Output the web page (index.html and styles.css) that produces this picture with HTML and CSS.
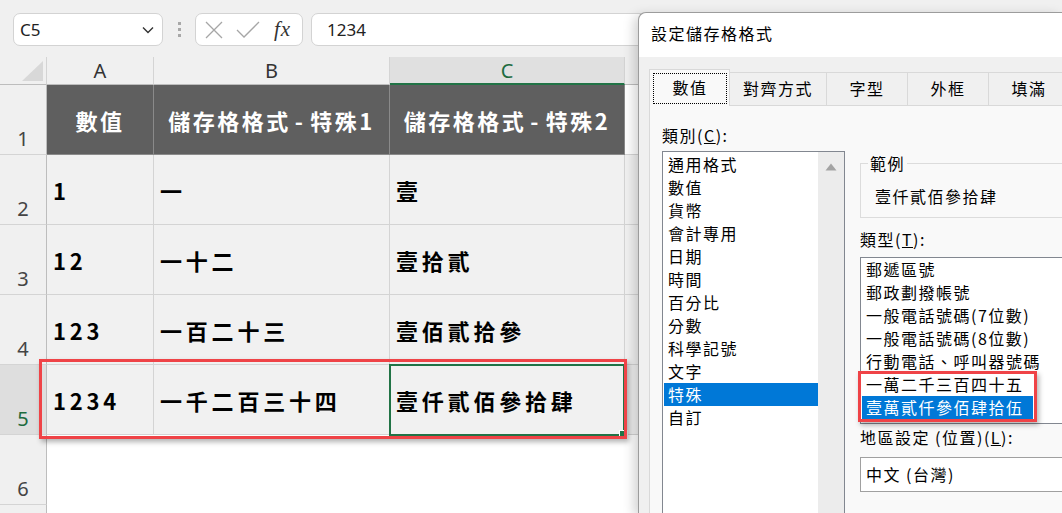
FILE: index.html
```html
<!DOCTYPE html>
<html lang="zh-Hant">
<head>
  <meta charset="UTF-8">
  <meta name="viewport" content="width=device-width, initial-scale=1.0">
  <link rel="stylesheet" href="styles.css">
</head>
<body>
<div class="excel">
  <div class="topbar">
    <div class="namebox">
      <span>C5</span>
      <svg width="12" height="8" viewBox="0 0 12 8"><path d="M1 1.5 L6 6.5 L11 1.5" fill="none" stroke="#333" stroke-width="1.4"/></svg>
    </div>
    <div class="grip"><i></i><i></i><i></i></div>
    <div class="fxbox">
      <svg width="18" height="18" viewBox="0 0 18 18"><path d="M1 1 L17 17 M17 1 L1 17" stroke="#a6a6a6" stroke-width="1.3"/></svg>
      <svg width="24" height="18" viewBox="0 0 24 18"><path d="M1 9 L8 16 L23 1" fill="none" stroke="#a6a6a6" stroke-width="1.3"/></svg>
      <span class="fx">fx</span>
    </div>
    <div class="formula">1234</div>
  </div>

  <div class="sheet">
    <div class="corner"><i></i></div>
    <div class="colhead">A</div>
    <div class="colhead">B</div>
    <div class="colhead sel">C</div>
    <div class="colhead"></div>

    <div class="rowhead">1</div>
    <div class="cell title">數值</div>
    <div class="cell title">儲存格格式<span class="dash">-</span>特殊1</div>
    <div class="cell title">儲存格格式<span class="dash">-</span>特殊2</div>
    <div class="cell"></div>

    <div class="rowhead">2</div>
    <div class="cell data">1</div>
    <div class="cell data">一</div>
    <div class="cell data">壹</div>
    <div class="cell data"></div>

    <div class="rowhead">3</div>
    <div class="cell data">12</div>
    <div class="cell data">一十二</div>
    <div class="cell data">壹拾貳</div>
    <div class="cell data"></div>

    <div class="rowhead">4</div>
    <div class="cell data">123</div>
    <div class="cell data">一百二十三</div>
    <div class="cell data">壹佰貳拾參</div>
    <div class="cell data"></div>

    <div class="rowhead sel">5</div>
    <div class="cell data">1234</div>
    <div class="cell data">一千二百三十四</div>
    <div class="cell data active">壹仟貳佰參拾肆</div>
    <div class="cell data"></div>

    <div class="rowhead">6</div>
    <div class="cell empty"></div>
    <div class="cell empty"></div>
    <div class="cell empty"></div>
    <div class="cell empty"></div>

    <div class="rowhead"></div>
    <div class="cell empty"></div>
    <div class="cell empty"></div>
    <div class="cell empty"></div>
    <div class="cell empty"></div>
  </div>
</div>

<div class="dialog">
  <div class="dlg-title">設定儲存格格式</div>
  <div class="tabs">
    <div class="tab sel"><span>數值</span></div>
    <div class="tab wide">對齊方式</div>
    <div class="tab">字型</div>
    <div class="tab">外框</div>
    <div class="tab">填滿</div>
  </div>
  <div class="panel">
    <div class="left-col">
      <div class="label">類別(<u>C</u>):</div>
      <div class="listbox">
        <ul class="items">
          <li>通用格式</li>
          <li>數值</li>
          <li>貨幣</li>
          <li>會計專用</li>
          <li>日期</li>
          <li>時間</li>
          <li>百分比</li>
          <li>分數</li>
          <li>科學記號</li>
          <li>文字</li>
          <li class="sel">特殊</li>
          <li>自訂</li>
        </ul>
        <div class="scrollbar">
          <svg width="12" height="8" viewBox="0 0 12 8"><path d="M6 0.5 L11.5 7.5 L0.5 7.5 Z" fill="#a3a3a3"/></svg>
        </div>
      </div>
    </div>
    <div class="right-col">
      <div class="group">
        <div class="group-label">範例</div>
        <div class="sample">壹仟貳佰參拾肆</div>
      </div>
      <div class="label type-label">類型(<u>T</u>):</div>
      <ul class="typelist">
        <li>郵遞區號</li>
        <li>郵政劃撥帳號</li>
        <li>一般電話號碼(7位數)</li>
        <li>一般電話號碼(8位數)</li>
        <li>行動電話、呼叫器號碼</li>
        <li>一萬二千三百四十五</li>
        <li class="sel">壹萬貳仟參佰肆拾伍</li>
      </ul>
      <div class="label locale-label">地區設定 (位置)(<u>L</u>):</div>
      <div class="dropdown">中文 (台灣)</div>
    </div>
  </div>
</div>

<div class="mark mark-sheet"></div>
<div class="mark mark-type"></div>
</body>
</html>
```

FILE: styles.css
```css
* {
  box-sizing: border-box;
}

body {
  margin: 0;
  width: 1062px;
  height: 513px;
  overflow: hidden;
  position: relative;
  background: #fff;
  font-family: "Noto Sans", "Noto Sans CJK TC", sans-serif;
}

.excel {
  height: 513px;
  overflow: hidden;
}

/* formula bar */
.topbar {
  height: 57px;
  background: #f0f0f0;
  display: flex;
  align-items: flex-start;
  padding: 13px 0 0 13px;
}

.namebox {
  width: 150px;
  height: 33px;
  background: #fff;
  border: 1px solid #d3d3d3;
  border-radius: 7px;
  display: flex;
  align-items: center;
  justify-content: space-between;
  padding: 0 8px 0 6px;
  font-size: 17px;
  color: #222;
}

.grip {
  width: 32px;
  height: 33px;
  display: flex;
  flex-direction: column;
  align-items: center;
  justify-content: center;
  gap: 3px;
}

.grip i {
  width: 3px;
  height: 3px;
  background: #a8a8a8;
}

.fxbox {
  width: 108px;
  height: 33px;
  background: #fff;
  border: 1px solid #d3d3d3;
  border-radius: 7px;
  display: flex;
  align-items: center;
  padding: 0 6px 0 9px;
  gap: 13px;
}

.fxbox .fx {
  font-family: "Liberation Serif", serif;
  font-style: italic;
  font-size: 21px;
  color: #333;
  margin-left: 1px;
  letter-spacing: 1px;
}

.formula {
  flex: 1;
  height: 33px;
  margin-left: 8px;
  background: #fff;
  border: 1px solid #d3d3d3;
  border-radius: 7px 0 0 7px;
  padding-left: 15px;
  line-height: 31px;
  font-size: 17px;
  color: #222;
}

/* grid */
.sheet {
  display: grid;
  grid-template-columns: 47px 107px 236px 235px 1fr;
  grid-template-rows: 28px repeat(7, 70px);
}

.corner {
  background: #f0f0f0;
  border-right: 1px solid #d4d4d4;
  border-bottom: 1px solid #bdbdbd;
  display: flex;
  align-items: flex-end;
  justify-content: flex-end;
  padding: 0 3px 3px 0;
}

.corner i {
  width: 21px;
  height: 20px;
  background: #d8d8d8;
  clip-path: polygon(100% 0, 100% 100%, 0 100%);
}

.colhead {
  background: #f0f0f0;
  border-right: 1px solid #d4d4d4;
  border-bottom: 1px solid #bdbdbd;
  text-align: center;
  font-size: 20px;
  line-height: 27px;
  color: #333;
}

.colhead.sel {
  background: #e0e0e0;
  color: #1d6b3f;
  border-bottom: 2px solid #217346;
}

.rowhead {
  background: #f0f0f0;
  border-right: 1px solid #bdbdbd;
  border-bottom: 1px solid #d4d4d4;
  display: flex;
  align-items: flex-end;
  justify-content: center;
  font-size: 20px;
  line-height: 26px;
  padding-bottom: 2px;
  color: #444;
}

.rowhead.sel {
  background: #dedede;
  color: #1d6b3f;
}

.cell {
  border-right: 1px solid #d4d4d4;
  border-bottom: 1px solid #d4d4d4;
  display: flex;
  align-items: center;
  font-family: "Noto Sans CJK TC", sans-serif;
}

.cell.empty {
  border: 0;
  background: #fff;
}

.cell.title {
  background: #5f5f5f;
  border-right-color: #8a8a8a;
  border-bottom-color: #8a8a8a;
  justify-content: center;
  color: #fff;
  font-size: 22px;
  font-weight: 700;
  letter-spacing: 2.5px;
}

.cell.title .dash {
  padding: 0 5px 0 4px;
}

.cell.data {
  background: #f1f1f1;
  padding-left: 6px;
  color: #000;
  font-size: 22px;
  font-weight: 700;
  letter-spacing: 3.8px;
}

.cell.active {
  position: relative;
}

.cell.active::after {
  content: "";
  position: absolute;
  top: -1px;
  left: -1px;
  right: -1px;
  bottom: -2px;
  border: 2px solid #217346;
}

.cell.active::before {
  content: "";
  position: absolute;
  right: -4px;
  bottom: -5px;
  width: 7px;
  height: 7px;
  background: #217346;
  border: 1px solid #fff;
  z-index: 1;
}

/* dialog window */
.dialog {
  position: absolute;
  left: 638px;
  top: 12px;
  width: 424px;
  height: 501px;
  overflow: hidden;
  background: #f0f0f0;
  border: 1px solid #9c9c9c;
  border-right: 0;
  border-bottom: 0;
  border-radius: 8px 0 0 0;
  box-shadow: -4px 3px 12px rgba(0, 0, 0, 0.18);
  font-family: "Noto Sans CJK TC", sans-serif;
  font-size: 16px;
  letter-spacing: 1.5px;
  color: #000;
}

.dlg-title {
  height: 44px;
  background: #fff;
  border-radius: 8px 0 0 0;
  padding-left: 12px;
  line-height: 41px;
}

.tabs {
  display: flex;
  align-items: flex-end;
  height: 36px;
  margin-top: 12px;
  padding-left: 10px;
  position: relative;
  z-index: 1;
}

.tab {
  flex-shrink: 0;
  width: 81px;
  height: 33px;
  border: 1px solid #d9d9d9;
  border-left: 0;
  border-bottom: 0;
  background: #f0f0f0;
  display: flex;
  align-items: center;
  justify-content: center;
  padding-bottom: 3px;
}

.tab.wide {
  width: 97px;
}

.tab.sel {
  height: 37px;
  margin-bottom: -1px;
  border-left: 1px solid #d9d9d9;
  background: #f9f9f9;
  align-items: flex-start;
  padding: 3px 0 0;
}

.tab.sel span {
  width: 74px;
  height: 31px;
  margin-left: 1px;
  border: 1px dotted #000;
  display: flex;
  align-items: center;
  justify-content: center;
  padding-bottom: 3px;
}

.panel {
  width: 440px;
  margin-left: 10px;
  height: 420px;
  background: #f9f9f9;
  border: 1px solid #d9d9d9;
  display: flex;
  gap: 15px;
  padding: 18px 0 0 12px;
}

.label {
  line-height: 23px;
}

.left-col {
  flex-shrink: 0;
  width: 183px;
}

.listbox {
  margin-top: 4px;
  height: 400px;
  background: #fff;
  border: 1px solid #828790;
  display: flex;
}

ul {
  list-style: none;
  margin: 0;
}

.items {
  flex: 1;
  padding: 1px 0 0 1px;
}

li {
  line-height: 23px;
  padding-left: 4px;
  white-space: nowrap;
}

li.sel {
  background: #0078d7;
  color: #fff;
}

.scrollbar {
  width: 26px;
  background: #ececec;
  display: flex;
  justify-content: center;
  padding-top: 11px;
}

.right-col {
  flex: 1;
}

.group {
  margin-top: 39px;
  height: 55px;
  border: 1px solid #dcdcdc;
  border-right: 0;
}

.group-label {
  width: fit-content;
  margin: -12px 0 0 7px;
  padding: 0 2px;
  line-height: 23px;
  background: #f9f9f9;
}

.sample {
  margin: 10px 0 0 14px;
  line-height: 23px;
}

.type-label {
  margin-top: 10px;
}

.typelist {
  margin-top: 6px;
  height: 167px;
  padding: 0 0 0 1px;
  background: #fff;
  border: 1px solid #828790;
  border-right: 0;
}

.typelist li.sel {
  width: 171px;
}

.locale-label {
  margin-top: 2px;
}

.dropdown {
  margin-top: 8px;
  height: 35px;
  background: #fff;
  border: 1px solid #a0a0a0;
  border-right: 0;
  padding-left: 5px;
  line-height: 33px;
}

/* red annotation boxes */
.mark {
  position: absolute;
  border: 3px solid #ef4347;
  box-shadow: 2px 3px 5px rgba(0, 0, 0, 0.3);
  z-index: 5;
}

.mark-sheet {
  left: 39px;
  top: 359px;
  width: 588px;
  height: 80px;
}

.mark-type {
  left: 858px;
  top: 371px;
  width: 179px;
  height: 51px;
}
```
